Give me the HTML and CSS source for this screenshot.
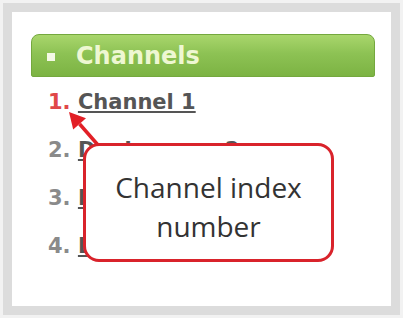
FILE: index.html
```html
<!DOCTYPE html>
<html lang="en">
<head>
  <meta charset="UTF-8" />
  <title>Channels</title>
  <link rel="stylesheet" href="styles.css">
</head>
<body>
  <div class="frame">
    <div class="panel">
      <div class="panel-head">
        <span class="bullet"></span>
        <span>Channels</span>
      </div>
      <ol class="channel-list">
        <li class="active"><span class="num">1.</span> <a href="#">Channel 1</a></li>
        <li><span class="num">2.</span> <a href="#">Dual screen 2</a></li>
        <li><span class="num">3.</span> <a href="#">L3</a></li>
        <li><span class="num">4.</span> <a href="#">Lobby</a></li>
      </ol>
    </div>

    <!-- annotation -->
    <svg class="arrow" width="379" height="294" viewBox="0 0 379 294">
      <line x1="86" y1="133" x2="67.6" y2="112" />
      <polygon points="57,100 74,106.2 61.2,117.6" />
    </svg>
    <div class="callout">Channel index<br>number</div>
  </div>
</body>
</html>
```

FILE: styles.css
```css
body {
  margin: 0;
  padding: 3px;
  background-color: #f2f2f2;
  font-family: 'DejaVu Sans', Verdana, sans-serif;
}

.frame {
  position: relative;
  height: 294px;
  border: 9px solid #dcdcdc;
  background-color: #fff;
}

.panel {
  padding: 22px 16px 0 19px;
}

.panel-head {
  display: flex;
  align-items: center;
  height: 41px;
  padding-left: 15px;
  border: 1px solid #74a83e;
  border-radius: 8px 8px 2px 2px;
  background: linear-gradient(#a9d66c, #8dc254 45%, #7cb343);
  color: #eef7d2;
  font-size: 24px;
  font-weight: bold;
}

.bullet {
  width: 8px;
  height: 8px;
  margin-right: 21px;
  margin-top: 3px;
  background-color: #f4f9e6;
}

.channel-list {
  list-style: none;
  margin: 1px 0 0;
  padding: 0 0 0 17px;
  font-size: 21px;
  font-weight: bold;
  line-height: 48px;
}

.channel-list .num {
  color: #8a8a8a;
}

.channel-list .active .num {
  color: #e04848;
}

.channel-list a {
  color: #555;
  text-decoration: underline;
}

.arrow {
  position: absolute;
  left: 0;
  top: 0;
}

.arrow line {
  stroke: #e21f26;
  stroke-width: 3.5;
}

.arrow polygon {
  fill: #e21f26;
}

.callout {
  position: absolute;
  left: 71px;
  top: 131px;
  box-sizing: border-box;
  width: 251px;
  height: 119px;
  padding-top: 22px;
  border: 3px solid #d9232b;
  border-radius: 16px;
  background-color: #fff;
  color: #333;
  font-family: 'Open Sans', sans-serif;
  font-size: 28px;
  line-height: 39px;
  text-align: center;
}
```
